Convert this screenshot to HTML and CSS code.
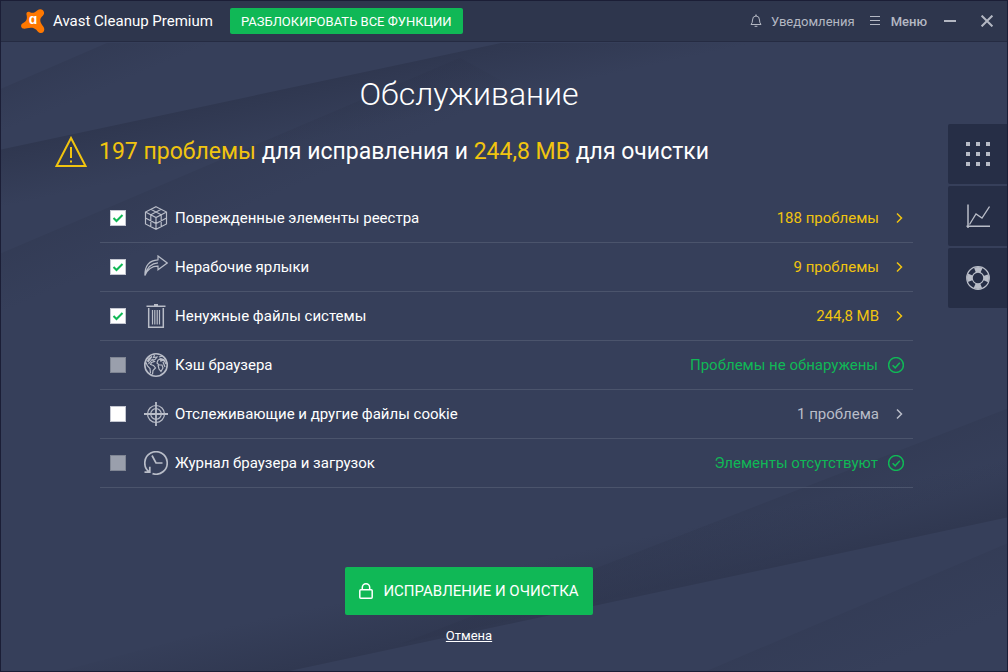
FILE: index.html
```html
<!DOCTYPE html>
<html lang="ru">
<head>
<meta charset="utf-8">
<title>Avast Cleanup Premium</title>
<meta name="viewport" content="width=device-width, initial-scale=1">
<link rel="stylesheet" href="styles.css">
</head>
<body>
<div class="window">
  <svg class="backdrop" viewBox="0 0 1008 672" preserveAspectRatio="none" aria-hidden="true">
    <defs>
      <linearGradient id="g1" gradientUnits="userSpaceOnUse" x1="250" y1="95" x2="262" y2="150"><stop offset="0" stop-color="#2b3249" stop-opacity=".6"/><stop offset="1" stop-color="#2b3249" stop-opacity="0"/></linearGradient>
      <linearGradient id="g2" gradientUnits="userSpaceOnUse" x1="50" y1="66" x2="66" y2="104"><stop offset="0" stop-color="#2b3249" stop-opacity=".3"/><stop offset="1" stop-color="#2b3249" stop-opacity="0"/></linearGradient>
      <linearGradient id="g3" gradientUnits="userSpaceOnUse" x1="221" y1="158" x2="243" y2="209"><stop offset="0" stop-color="#2b3249" stop-opacity=".25"/><stop offset="1" stop-color="#2b3249" stop-opacity="0"/></linearGradient>
      <linearGradient id="g4" gradientUnits="userSpaceOnUse" x1="800" y1="490" x2="822" y2="547"><stop offset="0" stop-color="#2b3249" stop-opacity=".25"/><stop offset="1" stop-color="#2b3249" stop-opacity="0"/></linearGradient>
      <linearGradient id="g5" gradientUnits="userSpaceOnUse" x1="700" y1="584" x2="688" y2="528"><stop offset="0" stop-color="#2b3249" stop-opacity=".55"/><stop offset="1" stop-color="#2b3249" stop-opacity="0"/></linearGradient>
      <linearGradient id="g6" gradientUnits="userSpaceOnUse" x1="880" y1="598" x2="906" y2="659"><stop offset="0" stop-color="#2b3249" stop-opacity=".2"/><stop offset="1" stop-color="#2b3249" stop-opacity="0"/></linearGradient>
    </defs>
    <path fill="url(#g1)" d="M0 149L501 42H760L0 260z"/>
    <path fill="url(#g2)" d="M0 88L106 42H260L0 160z"/>
    <path fill="url(#g3)" d="M0 253L460 57L520 90L0 320z"/>
    <path fill="url(#g4)" d="M1008 409L400 645L1008 515z"/>
    <path fill="url(#g5)" d="M1008 518L289 672H60L1008 420z"/>
    <path fill="url(#g6)" d="M1008 544L707 672H1008z"/>
  </svg>

  <header class="titlebar">
    <svg class="logo" viewBox="0 0 24 24" aria-hidden="true">
      <path fill="#ff7800" d="M5.500 5.500C5 3.500 7 2 9 3.200C11.500 4.500 14 3.500 16.500 1.200C19 -.8 22.500 .3 23 3.200C23.300 5 22.500 6 21 7.500C18.500 10 18.800 13 21.500 16.500C24.500 19.500 23.500 23.800 20 24C17.800 24.100 16.800 22.500 15.300 20.800C13 18.500 9.500 18.200 6 19.300C3 20.300 .3 19.500 .1 17.200C0 15.300 1 14.700 3 13.500C6 11.500 6.300 9 5.500 5.500z"/>
      <text x="12" y="15" class="logo-mark">ɑ</text>
    </svg>
    <span class="product">Avast Cleanup Premium</span>
    <button class="unlock" type="button">РАЗБЛОКИРОВАТЬ ВСЕ ФУНКЦИИ</button>
    <nav class="tools">
      <button class="tool" type="button">
        <svg width="12" height="14" viewBox="0 0 12 14" aria-hidden="true"><path d="M1 10.500Q2.500 9 2.500 6Q2.500 2 6 2Q9.500 2 9.500 6Q9.500 9 11 10.500z"/><path d="M5 1.200h2M4.600 12.300h2.800"/></svg>
        Уведомления
      </button>
      <button class="tool tool-menu" type="button">
        <svg width="10" height="10" viewBox="0 0 10 10" aria-hidden="true"><path d="M0 .5h10M0 4.500h10M0 8.500h10"/></svg>
        Меню
      </button>
      <button class="control" type="button" aria-label="Свернуть"><svg width="12" height="12" viewBox="0 0 12 12" aria-hidden="true"><path d="M0 6h12"/></svg></button>
      <button class="control control-close" type="button" aria-label="Закрыть"><svg width="12" height="12" viewBox="0 0 12 12" aria-hidden="true"><path d="M.6.6l10.800 10.800M11.400.6L.6 11.400"/></svg></button>
    </nav>
  </header>

  <div class="body">
    <main class="main">
      <h1 class="title">Обслуживание</h1>
      <p class="summary">
        <svg width="32" height="32" viewBox="0 0 32 32" aria-hidden="true"><path d="M16 2L30.500 30H1.500z"/><path d="M16 11v11M16 24.500v2"/></svg>
        <span><em>197 проблемы</em> для исправления и <em>244,8 MB</em> для очистки</span>
      </p>

      <ul class="list">
        <li class="row">
          <label class="item"><input type="checkbox" checked>
            <svg class="icon" viewBox="0 0 24 24" aria-hidden="true"><path d="M12 .7L22.500 6v12L12 23.300L1.500 18V6zM1.500 6L12 11.500L22.500 6M12 11.500v11.800M6.800 3.300L17.200 8.800v12M17.200 3.300L6.800 8.800v12M1.500 12L12 17.500L22.500 12"/></svg>
            <span>Поврежденные элементы реестра</span></label>
          <button class="status warn" type="button">188 проблемы <svg viewBox="0 0 16 16" aria-hidden="true"><path d="M9 3.500L13.500 8L9 12.500"/></svg></button>
        </li>
        <li class="row">
          <label class="item"><input type="checkbox" checked>
            <svg class="icon" viewBox="0 0 24 24" aria-hidden="true"><path d="M14 1L23.200 8L14 14.800v-3.600Q5 11 .9 20.500Q.8 5.500 14 4.800zM1.200 20Q4 8.500 14 7.800"/></svg>
            <span>Нерабочие ярлыки</span></label>
          <button class="status warn" type="button">9 проблемы <svg viewBox="0 0 16 16" aria-hidden="true"><path d="M9 3.500L13.500 8L9 12.500"/></svg></button>
        </li>
        <li class="row">
          <label class="item"><input type="checkbox" checked>
            <svg class="icon" viewBox="0 0 24 24" aria-hidden="true"><path stroke-width="1.500" d="M4.700 4v19.200h14.600V4M2.500 2.300h19M10 .8h4"/><path d="M8.500 6v14.500M10.800 6v14.500M13.200 6v14.500M15.500 6v14.500"/></svg>
            <span>Ненужные файлы системы</span></label>
          <button class="status warn" type="button">244,8 MB <svg viewBox="0 0 16 16" aria-hidden="true"><path d="M9 3.500L13.500 8L9 12.500"/></svg></button>
        </li>
        <li class="row">
          <label class="item"><input type="checkbox" disabled>
            <svg class="icon" viewBox="0 0 24 24" aria-hidden="true"><circle cx="12" cy="12" r="11.200" stroke-width="1.600"/><path d="M10.500 2L9.500 4.500L13 4L11 6.500L8.500 7L10.500 8.500L7.500 9.500L6.500 11.500L9.500 12.500L11.500 15L9 17.500L8.500 21.500M6.500 20L6 15.500L3.500 13L2 9.500M3 8.500L8 3.500M4.500 11L8.500 6M5.500 4.500L4 8"/><path d="M15 4l3-.8M14 7l3-1 3 1 2 4M14 7l-1 3 2 2h3l1 3-2 3.500-2-2.500-1-4M19 9l2 5"/><path class="solid" d="M15.500 5L20 6l1.500 3-3-1-2 1zM4 6L8 3L7 6L4 10z"/></svg>
            <span>Кэш браузера</span></label>
          <span class="status ok">Проблемы не обнаружены <svg viewBox="0 0 16 16" aria-hidden="true"><circle cx="8" cy="8" r="7.400"/><path d="M4.600 8.200L7.200 10.800L11.800 5.800"/></svg></span>
        </li>
        <li class="row">
          <label class="item"><input type="checkbox">
            <svg class="icon" viewBox="0 0 24 24" aria-hidden="true"><circle cx="12" cy="12" r="8.500"/><circle cx="12" cy="12" r="5.300"/><path stroke-width="1.800" d="M12 0v24M0 12h24"/></svg>
            <span>Отслеживающие и другие файлы cookie</span></label>
          <button class="status" type="button">1 проблема <svg viewBox="0 0 16 16" aria-hidden="true"><path d="M9 3.500L13.500 8L9 12.500"/></svg></button>
        </li>
        <li class="row">
          <label class="item"><input type="checkbox" disabled>
            <svg class="icon" viewBox="0 0 24 24" aria-hidden="true"><path stroke-width="1.700" d="M8.500 22.600A11.200 11.200 0 1 0 5 20.700M.5 21.200h5.300v-5.500"/><path stroke-width="1.700" d="M8 4.500L12 12h6.500"/></svg>
            <span>Журнал браузера и загрузок</span></label>
          <span class="status ok">Элементы отсутствуют <svg viewBox="0 0 16 16" aria-hidden="true"><circle cx="8" cy="8" r="7.400"/><path d="M4.600 8.200L7.200 10.800L11.800 5.800"/></svg></span>
        </li>
      </ul>

      <div class="actions">
        <button class="fix" type="button">
          <svg width="14" height="16" viewBox="0 0 14 16" aria-hidden="true"><rect x=".8" y="6.800" width="12.400" height="8.400" rx="1"/><path d="M3.300 6.800V4.500a3.700 3.700 0 0 1 7.400 0v2.300"/></svg>
          ИСПРАВЛЕНИЕ И ОЧИСТКА
        </button>
        <a class="cancel" href="#">Отмена</a>
      </div>
    </main>

    <aside class="side">
      <button class="tile" type="button" aria-label="Все функции"><svg viewBox="0 0 24 24" aria-hidden="true"><path class="solid" d="M0 0h4v4H0zM10 0h4v4h-4zM20 0h4v4h-4zM0 10h4v4H0zM10 10h4v4h-4zM20 10h4v4h-4zM0 20h4v4H0zM10 20h4v4h-4zM20 20h4v4h-4z"/></svg></button>
      <button class="tile" type="button" aria-label="Статистика"><svg viewBox="0 0 24 24" aria-hidden="true"><path stroke-width="1.500" d="M2 .5V24M.5 22.300H24"/><path stroke-width="1.300" d="M3.500 20.500L10 10L16 14L23.500 2.500"/></svg></button>
      <button class="tile" type="button" aria-label="Помощь"><svg viewBox="0 0 24 24" aria-hidden="true"><circle cx="12" cy="12" r="11.300" stroke-width="1.200"/><circle cx="12" cy="12" r="5.800" stroke-width="1.200"/><circle cx="12" cy="12" r="8.500" stroke-width="5" stroke-dasharray="6.676 6.676" stroke-dashoffset="3.338"/></svg></button>
    </aside>
  </div>
</div>
</body>
</html>
```

FILE: styles.css
```css
* {
  box-sizing: border-box;
}

body {
  margin: 0;
  font-family: Roboto, "Liberation Sans", sans-serif;
  color: #fff;
  background: #363f5a;
}

button {
  margin: 0;
  padding: 0;
  border: 0;
  background: none;
  font: inherit;
  color: inherit;
  cursor: pointer;
}

svg {
  flex: none;
  fill: none;
  stroke: currentColor;
}

.solid {
  fill: currentColor;
  stroke: none;
}

.window {
  position: relative;
  isolation: isolate;
  display: flex;
  flex-direction: column;
  min-height: 100vh;
  border: 1px solid #1b1e36;
}

.backdrop {
  position: absolute;
  inset: 0;
  z-index: -1;
  width: 100%;
  height: 100%;
  stroke: none;
}

/* Title bar */

.titlebar {
  display: flex;
  align-items: center;
  height: 41px;
  padding: 0 14px 0 20px;
  border-bottom: 1px solid #252b42;
  background: #2e364d;
}

.logo {
  width: 24px;
  height: 24px;
  stroke: none;
}

.logo-mark {
  fill: #fff;
  font-size: 14px;
  font-weight: 700;
  text-anchor: middle;
}

.product {
  margin-left: 8px;
  font-size: 15px;
}

.unlock {
  height: 26px;
  margin-left: 17px;
  padding: 0 11px;
  border-radius: 2px;
  background: #10b856;
  font-size: 13px;
}

.tools {
  display: flex;
  align-items: center;
  margin-left: auto;
  color: #b4b8c3;
}

.tool {
  display: flex;
  align-items: center;
  gap: 9px;
  font-size: 13px;
}

.tool-menu {
  gap: 11px;
  margin-left: 15px;
  font-weight: 500;
}

.control {
  display: flex;
  margin-left: 17px;
}

.control svg {
  stroke-width: 2;
}

.control-close {
  margin-left: 25px;
}

/* Layout */

.body {
  flex: 1;
  display: grid;
  grid-template-columns: 1fr 59px;
  column-gap: 11px;
}

.main {
  display: flex;
  flex-direction: column;
}

.title {
  margin: 32px 0 0;
  font-size: 32px;
  font-weight: 300;
  line-height: 40px;
  text-align: center;
}

.summary {
  display: flex;
  align-items: center;
  gap: 12px;
  margin: 22px 0 0 54px;
  font-size: 23px;
  line-height: 32px;
}

.summary svg {
  color: #f1c40f;
  stroke-width: 2;
}

.summary em {
  color: #f1c40f;
  font-style: normal;
}

/* Scan results */

.list {
  margin: 26px 24px 0 99px;
  padding: 0;
  list-style: none;
}

.row {
  display: flex;
  align-items: center;
  justify-content: space-between;
  height: 49px;
  padding: 0 9px 0 10px;
  border-bottom: 1px solid #4b546c;
  font-size: 15px;
}

.item {
  display: flex;
  align-items: center;
}

.item input {
  appearance: none;
  width: 16px;
  height: 16px;
  margin: 0 18px 0 0;
  border: 1px solid #c3c6d0;
  background: #fff;
}

.item input:checked {
  background: #fff url("data:image/svg+xml,%3Csvg xmlns='http://www.w3.org/2000/svg' viewBox='0 0 14 14'%3E%3Cpath d='M2.500 7L5.500 10L11.500 4' fill='none' stroke='%2310b856' stroke-width='2'/%3E%3C/svg%3E") center / 14px 14px no-repeat;
}

.item input:disabled {
  border-color: #7f8593;
  background: #9a9fac;
}

.icon {
  width: 24px;
  height: 24px;
  margin-right: 7px;
  color: #b9bdc8;
  stroke-width: 1.2;
}

.status {
  display: flex;
  align-items: center;
  gap: 9px;
  color: #b9bdc8;
}

.status svg {
  width: 16px;
  height: 16px;
  stroke-width: 1.5;
}

.warn {
  color: #f1c40f;
}

.ok {
  gap: 10px;
  color: #10b856;
}

/* Actions */

.actions {
  display: flex;
  flex-direction: column;
  align-items: center;
  gap: 12px;
  margin-top: auto;
  padding: 32px 0 26px;
}

.fix {
  display: flex;
  align-items: center;
  justify-content: center;
  gap: 10px;
  min-width: 248px;
  height: 48px;
  padding: 0 14px;
  border-radius: 2px;
  background: #10b856;
  font-size: 15px;
}

.fix svg {
  stroke-width: 1.5;
}

.cancel {
  color: #fff;
  font-size: 13px;
  line-height: 18px;
}

/* Side panel */

.side {
  display: flex;
  flex-direction: column;
  gap: 2px;
  padding-top: 82px;
}

.tile {
  display: flex;
  align-items: center;
  justify-content: center;
  height: 60px;
  border-radius: 2px 0 0 2px;
  background: #262e46;
  color: #b9bdc8;
}

.tile svg {
  width: 24px;
  height: 24px;
}
```
